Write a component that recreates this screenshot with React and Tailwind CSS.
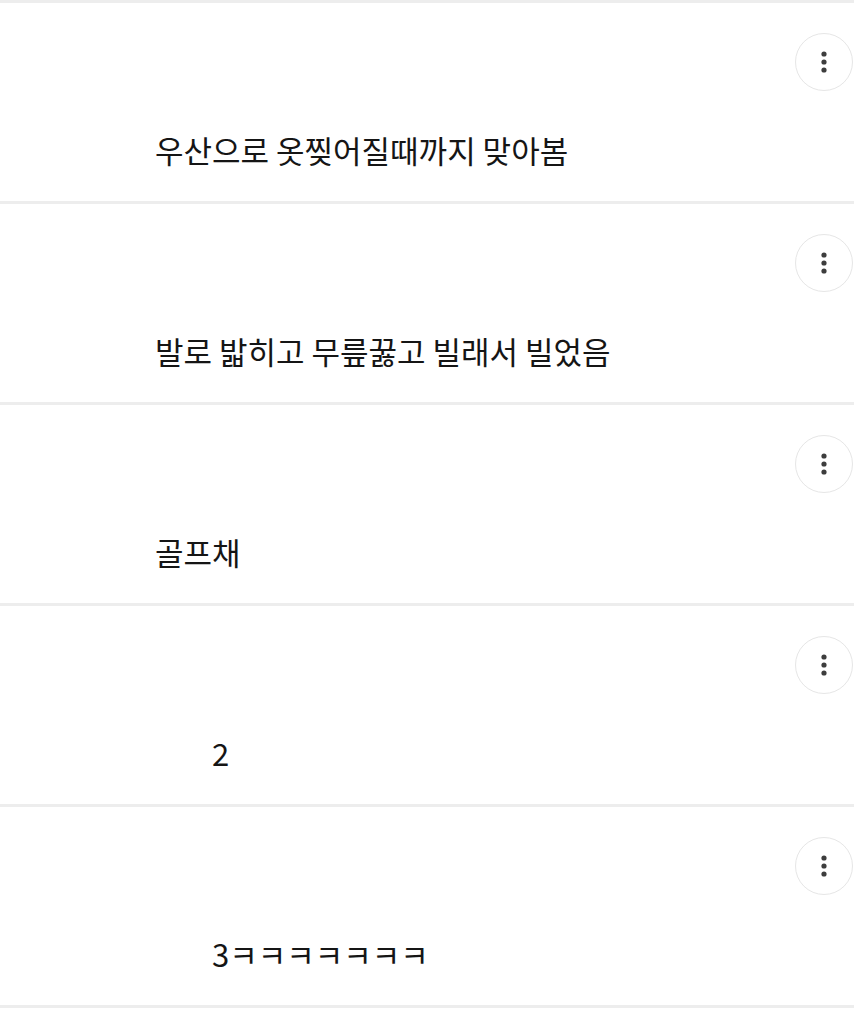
import React from "react";

const comments = [
  { id: 1, text: "우산으로 옷찢어질때까지 맞아봄", indent: "pl-[155px]" },
  { id: 2, text: "발로 밟히고 무릎꿇고 빌래서 빌었음", indent: "pl-[155px]" },
  { id: 3, text: "골프채", indent: "pl-[155px]" },
  { id: 4, text: "2", indent: "pl-[212px]" },
  { id: 5, text: "3ㅋㅋㅋㅋㅋㅋㅋ", indent: "pl-[212px]" },
];

const MoreButton = () => (
  <button className="w-[58px] h-[58px] rounded-full border border-[#e6e6e6] bg-white flex items-center justify-center">
    <svg width="6" height="22" viewBox="0 0 6 22" fill="#3d3d3d">
      <circle cx="3" cy="3" r="2.6" />
      <circle cx="3" cy="11" r="2.6" />
      <circle cx="3" cy="19" r="2.6" />
    </svg>
  </button>
);

const CommentRow = ({ item }) => (
  <div className="border-t-[3px] border-[#ededed] h-[201px]">
    <div className="flex justify-end pt-[30px] pr-[1px]">
      <MoreButton />
    </div>
    <p
      className={`${item.indent} mt-[40px] text-[31px] leading-[38px] text-[#151515]`}
      style={{ fontFamily: '"Noto Sans CJK KR", "Noto Sans", sans-serif' }}
    >
      {item.text}
    </p>
  </div>
);

export default function App() {
  return (
    <div className="w-[854px] h-[1012px] bg-white overflow-hidden">
      {comments.map((item) => (
        <CommentRow key={item.id} item={item} />
      ))}
      <div className="border-t-[3px] border-[#ededed]" />
    </div>
  );
}
